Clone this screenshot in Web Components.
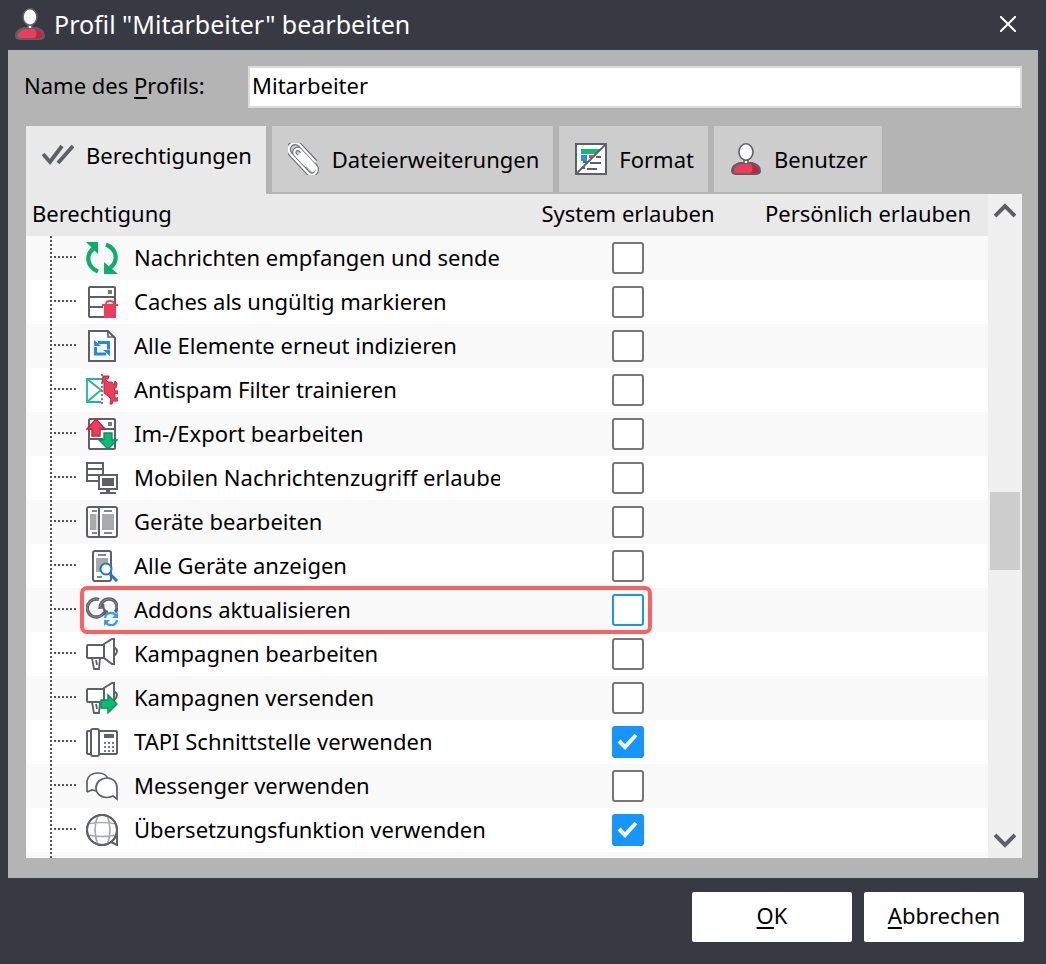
<!DOCTYPE html>
<html lang="de">
<head>
<meta charset="utf-8">
<meta name="viewport" content="width=device-width, initial-scale=1">
<title>Profil "Mitarbeiter" bearbeiten</title>
<style>
  body {
    margin: 0;
    font-family: "Noto Sans", "Open Sans", sans-serif;
    font-size: 22px;
    line-height: 32px;
    color: #000;
    background: #383a43;
  }
</style>
</head>
<body>
<profile-dialog heading='Profil "Mitarbeiter" bearbeiten'>
  <name-field slot="name" value="Mitarbeiter">Name des <u>P</u>rofils:</name-field>
  <tab-button slot="tab" icon="checks" active>Berechtigungen</tab-button>
  <tab-button slot="tab" icon="clip">Dateierweiterungen</tab-button>
  <tab-button slot="tab" icon="format">Format</tab-button>
  <tab-button slot="tab" icon="user">Benutzer</tab-button>
  <permission-list slot="panel"></permission-list>
  <dialog-button slot="action"><u>O</u>K</dialog-button>
  <dialog-button slot="action"><u>A</u>bbrechen</dialog-button>
</profile-dialog>

<script>
const ICONS = {
  user: `
    <path d="M2 28c0-5 4-7 8-8h12c4 1 8 3 8 8 0 3-3 3-5 3H7c-2 0-5 0-5-3z" fill="#ee3d58"/>
    <path d="M20 20h2c4 1 8 3 8 8 0 3-3 3-5 3h-6c4-2 5-6 1-11z" fill="#cf1d3f" stroke="none"/>
    <path d="M3 28c0-5 4-7 8-8h10c4 1 8 3 8 8 0 3-3 3-5 3H8c-2 0-5 0-5-3z" stroke-width="1.5"/>
    <path d="M14 17h4v3q-2 2-4 0z" fill="#fff" stroke-width="1.5"/>
    <ellipse cx="16" cy="9" rx="7" ry="8.2" fill="#fff" stroke-width="1.6"/>`,
  checks: `
    <path d="M1 15l7 8L20 7M16 24L31 7" stroke-width="3.9"/>`,
  clip: `
    <g transform="rotate(-43 16 16)">
      <path d="M22.500 26V3a6.500 6.500 0 0 0-13 0v26a5 5 0 0 0 10 0V7a3.500 3.500 0 0 0-7 0v16" stroke-width="4.600" stroke="#6f7277"/>
      <path d="M13 9h6v20a3 3 0 0 1-6 0z" fill="#fff" stroke="none"/>
      <path d="M22.500 26V3a6.500 6.500 0 0 0-13 0v26a5 5 0 0 0 10 0V7a3.500 3.500 0 0 0-7 0v16" stroke="#fff" stroke-width="2.200"/>
    </g>`,
  format: `
    <rect x="1" y="1" width="30" height="30" fill="#fff"/>
    <path d="M6 6h20l-5 5H6z" fill="#09bd77" stroke="none"/>
    <path d="M6 12h6v6H6z" fill="#1495ff" stroke="none"/>
    <path d="M14 12h5l-3 3h-2z" fill="#ee3d58" stroke="none"/>
    <path d="M21 14h5M15 20h11M8 19h4M6 25h4M12 26h10"/>
    <path d="M30 2L2 30" stroke-width="1.8"/>`,
  sync: `
    <path d="M12 29.500C1 25 -1 13 8 6M20 2.500C31 7 33 19 24 26" stroke="#0cae70" stroke-width="4.200"/>
    <path d="M0 0h12v12zM32 32H18V20z" fill="#0cae70" stroke="none"/>`,
  cache: `
    <rect x="3" y="1" width="26" height="30" rx="1" fill="#fff"/>
    <path d="M3 11h26M3 21h14"/>
    <path d="M22 4h4v4h-4z" fill="#77797d" stroke="none"/>
    <path d="M16 18h16v2h-2v12H18V20h-2z" fill="#ee3d58" stroke="none"/>
    <path d="M20 18c0-4 8-4 8 0" stroke="#ee3d58" stroke-width="1.8"/>`,
  index: `
    <path d="M3 1h19l7 7v23H3z" fill="#fff"/>
    <path d="M22 1v6h7" stroke-width="1.6"/>
    <path d="M12 12.500h10.500v7M20 24H9.500v-7" stroke="#1d8af0" stroke-width="3" stroke-linejoin="miter"/>
    <path d="M8 10v6h7zM24 26v-6h-7z" fill="#1d8af0" stroke="none"/>`,
  spam: `
    <path d="M15 5H1v23h14M1 5l14 11L1 28" stroke="#1cb795" fill="#fff" stroke-width="1.8"/>
    <path d="M17 2h6l-1 3h-3l3 3h4l2 3 1-4 2 2-1 5h-2l1 3h3v3l-3-1v5h2l2-1v4h-6l-1 3h-2l1-5-3-3-4-3V8h-2z" fill="#ee3d58" stroke="#cf1d3f" stroke-width="1"/>
    <path d="M16 0v32" stroke-dasharray="2 2" stroke-width="1.6"/>`,
  transfer: `
    <rect x="3" y="1" width="26" height="30" rx="1" fill="#fff"/>
    <path d="M3 11h26M3 21h14"/>
    <path d="M22 4h4v4h-4z" fill="#77797d" stroke="none"/>
    <path d="M10 1l9 10h-5v7H6v-7H1z" fill="#ee3d58" stroke="#cf1d3f" stroke-width="1.4"/>
    <path d="M18 15h8v7h5l-9 9-9-9h5z" fill="#09bd77" stroke="#099158" stroke-width="1.4"/>`,
  mobile: `
    <path d="M1 1h16v18H1zM1 7h16M1 13h16" fill="#fff"/>
    <path d="M13 13h18v14H13z" fill="#fff"/>
    <path d="M16 16h12v8H16zM20 28h4v2h-4z" fill="#5d6066" stroke="none"/>
    <path d="M14 31h16"/>`,
  devices: `
    <rect x="1" y="1" width="30" height="30" rx="2" fill="#fff"/>
    <path d="M13 1v30"/>
    <path d="M4 8h6v16H4zM16 8h12v16H16z" fill="#a8aaae" stroke="none"/>
    <path d="M10 8h2v16h-2z" fill="#d9dadc" stroke="none"/>
    <path d="M6 5h5M18 5h8M6 27h5M18 27h8" stroke-width="1.6"/>`,
  lookup: `
    <rect x="7" y="1" width="18" height="30" rx="2" fill="#fff"/>
    <path d="M10 8h12v14H10z" fill="#a8aaae" stroke="none"/>
    <path d="M12 5h8M11 27h5" stroke-width="1.6"/>
    <circle cx="20" cy="19" r="5.500" fill="#fff" stroke="#1878d0" stroke-width="2"/>
    <path d="M24 24l7 7" stroke="#1878d0" stroke-width="3"/>`,
  addons: `
    <path d="M13 5.500A9 9 0 1 0 17 20l3-2M14 15c0-6 4-10 9-10 5 0 8 4 8 9 0 2-1 3-2 4" stroke-width="3.400"/>
    <path d="M13 5.500A9 9 0 1 0 17 20M14 15c0-6 4-10 9-10 5 0 8 4 8 9" stroke="#8b8d91" stroke-width="1"/>
    <path d="M17 10c0 4 1 8 5 8" stroke-width="2.400"/>
    <path d="M19 24c1-6 9-7 11-2M31 26c-1 6-9 7-11 2" stroke="#2f9df5" stroke-width="2.2"/>
    <path d="M32 18v6h-6zM18 32v-6h6z" fill="#2f9df5" stroke="none"/>`,
  campaign: `
    <path d="M28 9q6 4 0 9" />
    <path d="M18 6l8-5h2v25h-2l-8-6z" fill="#fff"/>
    <path d="M6 20l2 11h5l1-11M10 22l1 5" fill="#fff" stroke-width="1.8"/>
    <rect x="1" y="7" width="17" height="13" rx="1" fill="#fff"/>`,
  send: `
    <path d="M28 9q6 4 0 9" />
    <path d="M18 6l8-5h2v19H18z" fill="#fff"/>
    <path d="M6 20l2 11h5l1-11M10 22l1 5" fill="#fff" stroke-width="1.8"/>
    <rect x="1" y="7" width="17" height="13" rx="1" fill="#fff"/>
    <path d="M15 18h7v-5l9 9-9 9v-5h-7z" fill="#09bd77" stroke="#099158" stroke-width="1.4"/>`,
  phone: `
    <rect x="1" y="5" width="30" height="23" rx="1" fill="#fff"/>
    <rect x="5" y="3" width="8" height="27" rx="2" fill="#fff"/>
    <path d="M18 8h10v4H18z" fill="#5d6066" stroke="none"/>
    <path d="M18 16h2v2h-2zM22 16h2v2h-2zM26 16h2v2h-2zM18 20h2v2h-2zM22 20h2v2h-2zM26 20h2v2h-2zM18 24h2v2h-2zM22 24h2v2h-2zM26 24h2v2h-2z" fill="#77797d" stroke="none"/>`,
  chat: `
    <path d="M1 22V11C2 6 6 3 12 3s9 3 10 6M1 22l5-2 5 1" fill="#fff" stroke-width="1.7"/>
    <path d="M21 8c6 0 10 4 10 10v11l-4-3c-9 4-17-1-17-8 0-6 5-10 11-10z" fill="#fff" stroke-width="1.7"/>`,
  globe: `
    <circle cx="16" cy="16" r="15" fill="#fff"/>
    <path d="M2 10q14-3 28 0M2 21q14 3 28 0M12 1q-6 15 0 30M21 1q6 15 0 30" stroke="#a8aaae" stroke-width="1.7"/>
    <path d="M31 17v14l-6-3"/>
    <circle cx="16" cy="16" r="15"/>`
};

const PERMISSIONS = [
  { icon: 'sync', label: 'Nachrichten empfangen und senden' },
  { icon: 'cache', label: 'Caches als ungültig markieren' },
  { icon: 'index', label: 'Alle Elemente erneut indizieren' },
  { icon: 'spam', label: 'Antispam Filter trainieren' },
  { icon: 'transfer', label: 'Im-/Export bearbeiten' },
  { icon: 'mobile', label: 'Mobilen Nachrichtenzugriff erlauben' },
  { icon: 'devices', label: 'Geräte bearbeiten' },
  { icon: 'lookup', label: 'Alle Geräte anzeigen' },
  { icon: 'addons', label: 'Addons aktualisieren', marked: true },
  { icon: 'campaign', label: 'Kampagnen bearbeiten' },
  { icon: 'send', label: 'Kampagnen versenden' },
  { icon: 'phone', label: 'TAPI Schnittstelle verwenden', checked: true },
  { icon: 'chat', label: 'Messenger verwenden' },
  { icon: 'globe', label: 'Übersetzungsfunktion verwenden', checked: true }
];

class AppIcon extends HTMLElement {
  connectedCallback() {
    if (!this.shadowRoot) this.attachShadow({ mode: 'open' });
    this.shadowRoot.innerHTML = `
      <style>
        :host { display: block; flex: none; width: 32px; height: 32px; }
        svg { display: block; width: 100%; height: 100%; fill: none; stroke: #5d6066; stroke-width: 2; }
      </style>
      <svg viewBox="0 0 32 32" aria-hidden="true">${ICONS[this.getAttribute('name')] || ''}</svg>
    `;
  }
}
customElements.define('app-icon', AppIcon);

class NameField extends HTMLElement {
  connectedCallback() {
    this.attachShadow({ mode: 'open' });
    this.shadowRoot.innerHTML = `
      <style>
        :host { display: flex; align-items: center; }
        label { flex: none; width: 224px; padding-bottom: 4px; }
        ::slotted(u) { text-decoration-thickness: 2px; text-underline-offset: 3px; }
        input {
          flex: 1;
          min-width: 0;
          box-sizing: border-box;
          height: 42px;
          margin: 0;
          padding: 0 2px 4px;
          border: 2px solid #dcdcdc;
          border-radius: 0;
          background: #fff;
          color: inherit;
          font: inherit;
          outline: none;
        }
      </style>
      <label for="name"><slot></slot></label>
      <input id="name" type="text">
    `;
    this.shadowRoot.getElementById('name').value = this.getAttribute('value') || '';
  }
}
customElements.define('name-field', NameField);

class TabButton extends HTMLElement {
  connectedCallback() {
    this.attachShadow({ mode: 'open' });
    this.shadowRoot.innerHTML = `
      <style>
        :host { display: flex; margin-bottom: 2px; }
        :host([active]) { margin-bottom: 0; }
        button {
          display: flex;
          align-items: center;
          gap: 12px;
          height: 66px;
          padding: 0 14px 0 16px;
          border: none;
          background: #cdcdcd;
          color: inherit;
          font: inherit;
          cursor: pointer;
        }
        :host([active]) button { height: 68px; padding-bottom: 10px; background: #e9e9e9; }
      </style>
      <button type="button" role="tab">
        <app-icon name="${this.getAttribute('icon')}"></app-icon>
        <slot></slot>
      </button>
    `;
    this.shadowRoot.querySelector('button').setAttribute('aria-selected', this.hasAttribute('active'));
  }
}
customElements.define('tab-button', TabButton);

class DialogButton extends HTMLElement {
  connectedCallback() {
    this.attachShadow({ mode: 'open' });
    this.shadowRoot.innerHTML = `
      <style>
        :host { display: block; }
        button {
          width: 160px;
          height: 50px;
          padding: 0 0 4px;
          border: none;
          border-radius: 2px;
          background: #fff;
          color: inherit;
          font: inherit;
          cursor: pointer;
        }
        ::slotted(u) { text-decoration-thickness: 2px; text-underline-offset: 3px; }
      </style>
      <button type="button"><slot></slot></button>
    `;
  }
}
customElements.define('dialog-button', DialogButton);

class ScrollRail extends HTMLElement {
  connectedCallback() {
    this.attachShadow({ mode: 'open' });
    this.shadowRoot.innerHTML = `
      <style>
        :host { display: flex; flex-direction: column; width: 34px; background: #f0f0f0; }
        button {
          flex: none;
          display: flex;
          align-items: center;
          justify-content: center;
          height: 34px;
          padding: 0;
          border: none;
          background: none;
        }
        svg { width: 22px; height: 16px; fill: none; stroke: #5d6066; stroke-width: 4; }
        .track { flex: 1; display: flex; flex-direction: column; padding: 0 2px; }
        .before { flex: 264; }
        .thumb { flex: 78; background: #cdcdcd; }
        .after { flex: 254; }
      </style>
      <button type="button" aria-label="Nach oben"><svg viewBox="0 0 22 16"><path d="M1 13L11 3l10 10"/></svg></button>
      <div class="track"><div class="before"></div><div class="thumb"></div><div class="after"></div></div>
      <button type="button" aria-label="Nach unten"><svg viewBox="0 0 22 16"><path d="M1 2l10 10L21 2"/></svg></button>
    `;
  }
}
customElements.define('scroll-rail', ScrollRail);

class PermissionList extends HTMLElement {
  connectedCallback() {
    this.attachShadow({ mode: 'open' });
    this.shadowRoot.innerHTML = `
      <style>
        :host { display: flex; height: 100%; background: #fff; }
        .view { flex: 1; min-width: 0; overflow: hidden; }
        table { width: 100%; table-layout: fixed; border-collapse: collapse; }
        th, td { padding: 0; font-weight: 400; }
        th { height: 38px; padding-bottom: 4px; background: #e9e9e9; }
        th:first-child { text-align: left; padding-left: 6px; }
        th:not(:first-child) { width: 240px; }
        tbody tr { height: 44px; }
        tbody tr:nth-child(odd) { background: #f9f9f9; }
        .name {
          position: relative;
          display: flex;
          align-items: center;
          height: 44px;
          padding: 0 8px 0 24px;
        }
        /* dotted branch of the tree */
        .trunk { flex: none; width: 2px; height: 44px; background: repeating-linear-gradient(#555 0 2px, transparent 2px 4px); }
        .twig { flex: none; width: 22px; height: 2px; margin: 0 10px 2px 2px; background: repeating-linear-gradient(90deg, #555 0 2px, transparent 2px 4px); }
        label { flex: 1; min-width: 0; margin-left: 16px; padding-bottom: 2px; overflow: hidden; white-space: nowrap; }
        .marker {
          position: absolute;
          top: -2px;
          left: 54px;
          right: -144px;
          bottom: -2px;
          box-sizing: border-box;
          border: 4px solid #ff5f5f;
          border-radius: 7px;
          pointer-events: none;
        }
        input {
          appearance: none;
          display: block;
          width: 32px;
          height: 32px;
          margin: 0 auto;
          border: 2px solid #777;
          border-radius: 3px;
          background: #fff;
        }
        .marked input { border-color: #1495ff; }
        input:checked {
          border-color: #1495ff;
          background: #1495ff url('data:image/svg+xml,<svg xmlns="http://www.w3.org/2000/svg" viewBox="0 0 28 28"><path d="M5 13l6 6L22 7" fill="none" stroke="white" stroke-width="4"/></svg>') center / 28px 28px no-repeat;
        }
      </style>
      <div class="view">
        <table>
          <thead>
            <tr><th>Berechtigung</th><th>System erlauben</th><th>Persönlich erlauben</th></tr>
          </thead>
          <tbody></tbody>
        </table>
      </div>
      <scroll-rail></scroll-rail>
    `;
    const body = this.shadowRoot.querySelector('tbody');
    body.innerHTML = PERMISSIONS.map((p, i) => `
      <tr class="${p.marked ? 'marked' : ''}">
        <td><div class="name">
          <span class="trunk"></span><span class="twig"></span>
          <app-icon name="${p.icon}"></app-icon>
          <label for="perm-${i}">${p.label}</label>
          ${p.marked ? '<span class="marker"></span>' : ''}
        </div></td>
        <td><input id="perm-${i}" type="checkbox" ${p.checked ? 'checked' : ''}></td>
        <td></td>
      </tr>
    `).join('') + '<tr><td><div class="name"><span class="trunk"></span></div></td><td></td><td></td></tr>';
  }
}
customElements.define('permission-list', PermissionList);

class ProfileDialog extends HTMLElement {
  connectedCallback() {
    this.attachShadow({ mode: 'open' });
    this.shadowRoot.innerHTML = `
      <style>
        :host { display: flex; flex-direction: column; height: 100vh; background: #383a43; }
        header {
          flex: none;
          display: flex;
          align-items: center;
          gap: 8px;
          height: 50px;
          box-sizing: border-box;
          padding: 0 22px 2px 14px;
        }
        h1 { flex: 1; margin: 0; font-size: 25px; font-weight: 400; color: #fff; }
        .close { display: flex; padding: 8px; border: none; background: none; }
        .close svg { width: 16px; height: 16px; fill: none; stroke: #fff; stroke-width: 2; }
        main {
          flex: 1;
          min-height: 0;
          display: flex;
          flex-direction: column;
          margin: 0 8px;
          padding: 16px 16px 20px;
          background: #b4b4b4;
        }
        .tabs { display: flex; gap: 6px; margin: 18px 0 0 2px; }
        .panel { flex: 1; min-height: 0; margin-left: 2px; }
        footer { flex: none; display: flex; justify-content: flex-end; gap: 12px; padding: 14px 22px 22px; }
      </style>
      <header>
        <app-icon name="user"></app-icon>
        <h1></h1>
        <button class="close" type="button" aria-label="Schließen">
          <svg viewBox="0 0 16 16"><path d="M0 0l16 16M16 0L0 16"/></svg>
        </button>
      </header>
      <main>
        <slot name="name"></slot>
        <div class="tabs" role="tablist"><slot name="tab"></slot></div>
        <div class="panel"><slot name="panel"></slot></div>
      </main>
      <footer><slot name="action"></slot></footer>
    `;
    this.shadowRoot.querySelector('h1').textContent = this.getAttribute('heading');
  }
}
customElements.define('profile-dialog', ProfileDialog);
</script>
</body>
</html>
